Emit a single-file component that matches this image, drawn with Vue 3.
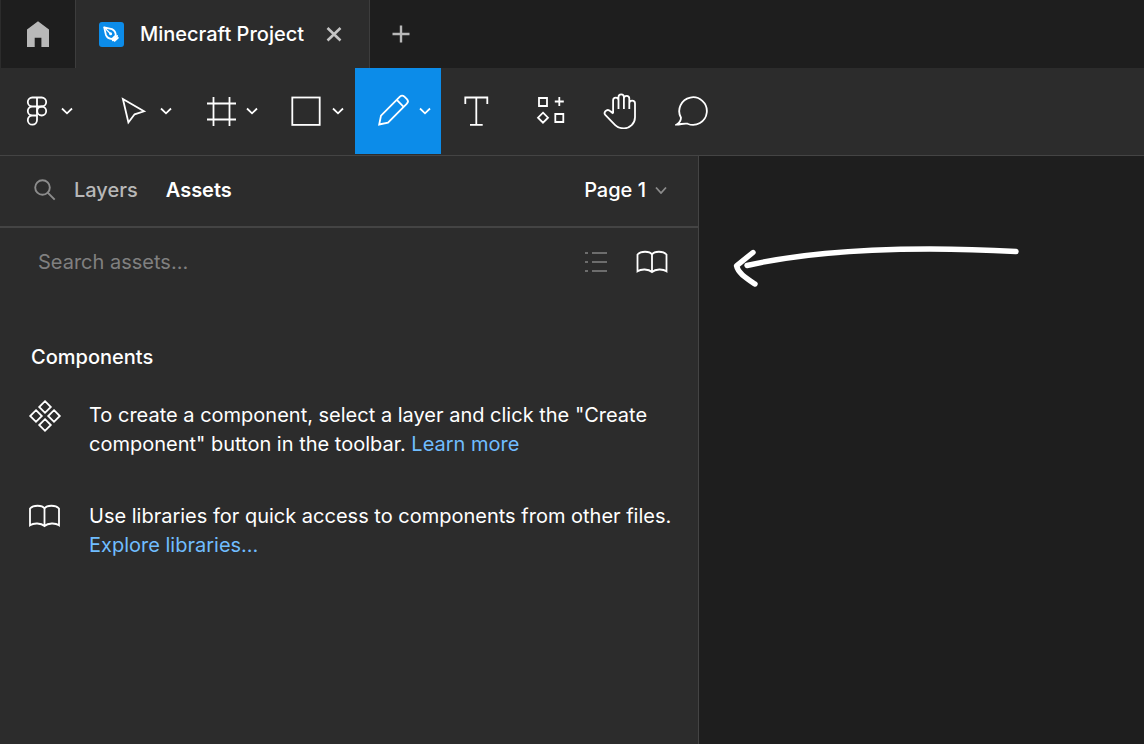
<script setup>
import { ref } from 'vue'

const query = ref('')
</script>

<template>
  <div class="app">
    <header class="tabs">
      <button class="home" aria-label="Home">
        <svg width="26" height="28" viewBox="0 0 26 28" fill="#b8b8b8">
          <path d="M2 9.6 13 1.3 24 9.6V27h-7.6v-9.3H9.7V27H2z" />
        </svg>
      </button>
      <div class="tab">
        <svg class="file-icon" width="25" height="25" viewBox="0 0 25 25">
          <rect width="25" height="25" rx="3" fill="#0c8ce9" />
          <g fill="none" stroke="#fff" stroke-width="1.8" stroke-linejoin="round" stroke-linecap="round">
            <path d="M5.2 5.4 13 7.1c2.2 1 3.7 3.4 3.8 6.3L13.2 17C10.1 16.8 7.9 15.3 6.9 12.8z" />
            <path d="M5.2 5.4 10.8 11" stroke-width="1.3" />
            <path d="M13.8 18.3 18.2 13.9M15.6 18.8 18.9 15.8" />
          </g>
          <circle cx="11.6" cy="11.8" r="1.5" fill="#fff" />
        </svg>
        <span class="title">Minecraft Project</span>
        <button class="close" aria-label="Close tab">
          <svg width="16" height="16" viewBox="0 0 16 16" fill="none" stroke="#c4c4c4" stroke-width="2.6">
            <path d="M1.5 2 14.5 14.5M14.5 2 1.5 14.5" />
          </svg>
        </button>
      </div>
      <button class="new" aria-label="New tab">
        <svg width="18" height="18" viewBox="0 0 18 18" fill="none" stroke="#b8b8b8" stroke-width="2.4">
          <path d="M9 .5V17.5M.5 9H17.5" />
        </svg>
      </button>
    </header>

    <nav class="toolbar" aria-label="Tools">
      <button class="tool menu main-menu" aria-label="Main menu">
        <svg class="glyph" viewBox="0 0 36 36">
          <path d="M18 4.5H13.3a4.5 4.5 0 0 0 0 9H18zM18 4.5h4.7a4.5 4.5 0 0 1 0 9H18zM18 13.5H13.3a4.5 4.5 0 0 0 0 9H18zM18 22.5H13.3a4.6 4.6 0 1 0 4.7 4.6z" />
          <circle cx="22.7" cy="18" r="4.5" />
        </svg>
        <svg class="chevron" viewBox="0 0 12 8"><path d="M1 1.5 6 6.3 11 1.5" /></svg>
      </button>
      <button class="tool menu" aria-label="Move">
        <svg class="glyph" viewBox="0 0 36 36">
          <path d="M5.9 6 27 18.3 17.6 21.3 11.4 29.5z" />
        </svg>
        <svg class="chevron" viewBox="0 0 12 8"><path d="M1 1.5 6 6.3 11 1.5" /></svg>
      </button>
      <button class="tool menu" aria-label="Frame">
        <svg class="glyph" viewBox="0 0 36 36">
          <path d="M10.5 4V33M26.5 4V33M4 10.5H33M4 26.5H33" />
        </svg>
        <svg class="chevron" viewBox="0 0 12 8"><path d="M1 1.5 6 6.3 11 1.5" /></svg>
      </button>
      <button class="tool menu" aria-label="Rectangle">
        <svg class="glyph" viewBox="0 0 36 36">
          <rect x="3.3" y="4.5" width="27.4" height="27.4" />
        </svg>
        <svg class="chevron" viewBox="0 0 12 8"><path d="M1 1.5 6 6.3 11 1.5" /></svg>
      </button>
      <button class="tool menu active" aria-label="Pencil" aria-pressed="true">
        <svg class="glyph" viewBox="0 0 36 36">
          <path d="M4.2 31.5 6 22.6 24.9 3.7a3.2 3.2 0 0 1 4.5 0l2.5 2.5a3.2 3.2 0 0 1 0 4.5L13 29.6zM21.8 6.8 28.6 13.8" />
        </svg>
        <svg class="chevron" viewBox="0 0 12 8"><path d="M1 1.5 6 6.3 11 1.5" /></svg>
      </button>
      <button class="tool" aria-label="Text">
        <svg class="glyph" viewBox="0 0 36 36">
          <path d="M6.3 11V4.5H28.3V11M17.3 4.5V31.8M11 31.8H23.7" />
        </svg>
      </button>
      <button class="tool" aria-label="Resources">
        <svg class="glyph" viewBox="0 0 36 36">
          <path d="M8 5h8v8H8zM24.3 21h8v8h-8zM28.3 4V13M23.8 8.5H32.8M12 19.7 17 24.7 12 29.7 7 24.7z" />
        </svg>
      </button>
      <button class="tool" aria-label="Hand">
        <svg class="glyph" viewBox="0 0 36 36">
          <path d="M10.1 20.5V7.3a2.7 2.7 0 0 1 5.4 0V16M15.5 16V4a2.7 2.7 0 0 1 5.4 0V16M20.9 16V5.6a2.7 2.7 0 0 1 5.4 0V16M26.3 10.5a2.8 2.8 0 0 1 5.7 0V24.3a11 11 0 0 1-11.3 11c-4 0-6.3-1-8.5-3.2L2.5 22.2a2.9 2.9 0 0 1 0-4c1.5-1.6 3.6-1.2 5 .1l2.6 2.2" />
        </svg>
      </button>
      <button class="tool" aria-label="Comment">
        <svg class="glyph" viewBox="0 0 36 36">
          <path d="M1.7 31.5C4.5 29.8 5.9 27.8 6 24.8A13.8 13.8 0 1 1 12.5 30.7C9 30.1 5.5 31.5 1.7 31.5z" />
        </svg>
      </button>
    </nav>

    <div class="workspace">
      <aside class="panel">
        <div class="panel-tabs">
          <svg class="search-icon" width="22" height="22" viewBox="0 0 22 22" fill="none" stroke="#8c8c8c" stroke-width="1.9">
            <circle cx="8.5" cy="8.5" r="7.3" />
            <path d="M13.7 13.7 20.7 20.7" />
          </svg>
          <button class="panel-tab">Layers</button>
          <button class="panel-tab selected">Assets</button>
          <button class="page">
            Page 1
            <svg class="page-chevron" viewBox="0 0 12 8"><path d="M1 1.5 6 7 11 1.5" /></svg>
          </button>
        </div>
        <div class="search">
          <input v-model="query" type="text" placeholder="Search assets..." aria-label="Search assets" />
          <button class="list" aria-label="Show as list">
            <svg width="24" height="22" viewBox="0 0 24 22" fill="none" stroke="#828282" stroke-width="1.7">
              <path d="M1 2H4M8 2H23M1 11H4M8 11H23M1 20H4M8 20H23" />
            </svg>
          </button>
          <button aria-label="Team library">
            <svg class="book" viewBox="0 0 34 24">
              <path d="M17 4.5C14.5.9 6 .8 2.500 4.500V21.300C6 18.800 13.500 18.800 17 22 20.500 18.800 28 18.800 31.500 21.300V4.500C28 .8 19.500.9 17 4.500V22" />
            </svg>
          </button>
        </div>
        <section class="components">
          <h2>Components</h2>
          <div class="hint">
            <svg class="component-icon" viewBox="0 0 34 34">
              <path d="M17 2.200 22.800 8 17 13.800 11.200 8zM8 11.200 13.800 17 8 22.800 2.200 17zM26 11.200 31.800 17 26 22.800 20.200 17zM17 20.200 22.800 26 17 31.800 11.200 26z" />
            </svg>
            <p>To create a component, select a layer and click the "Create component" button in the toolbar. <a href="#learn">Learn more</a></p>
          </div>
          <div class="hint">
            <svg class="book" viewBox="0 0 34 24">
              <path d="M16.500 4.500C14 .9 5.500.8 2 4.500V21.300C5.500 18.800 13 18.800 16.500 22 20 18.800 27.500 18.800 31 21.300V4.500C27.500.8 19 .9 16.500 4.500V22" />
            </svg>
            <p>Use libraries for quick access to components from other files. <a href="#libraries">Explore libraries...</a></p>
          </div>
        </section>
      </aside>
      <main class="canvas">
        <svg width="296" height="52" viewBox="0 0 296 52" fill="none" stroke="#fff" stroke-width="5.4" stroke-linecap="round" stroke-linejoin="round">
          <path d="M18 25.5C90 9 190 6 287 11.5" />
          <path d="M24 12.5 7.5 25.8C9 33 17 38 26 44" />
        </svg>
      </main>
    </div>
  </div>
</template>

<style>
body {
  margin: 0;
  background: #1e1e1e;
}
</style>

<style scoped>
.app {
  display: flex;
  flex-direction: column;
  min-height: 100vh;
  background: #1e1e1e;
  color: #fff;
  font-family: Inter, "Liberation Sans", sans-serif;
  font-size: 20px;
  line-height: 29px;
}
button {
  display: flex;
  align-items: center;
  justify-content: center;
  flex: none;
  margin: 0;
  padding: 0;
  border: 0;
  background: none;
  color: inherit;
  font: inherit;
}
svg {
  display: block;
  flex: none;
}
.tabs {
  display: flex;
  height: 68px;
  border-left: 1px solid #2c2c2c;
}
.home {
  width: 74px;
}
.tab {
  display: flex;
  align-items: center;
  box-sizing: border-box;
  width: 295px;
  padding-left: 23px;
  border: solid #3d3d3d;
  border-width: 0 1px;
  background: #2c2c2c;
}
.title {
  margin-left: 16px;
  font-weight: 500;
}
.close {
  margin-left: auto;
  margin-right: 27px;
}
.new {
  width: 62px;
}
.toolbar {
  display: flex;
  height: 87px;
  border-bottom: 1px solid #444;
  background: #2c2c2c;
}
.tool {
  width: 72px;
  height: 86px;
}
.menu {
  justify-content: flex-start;
  box-sizing: border-box;
  width: 86px;
  padding-left: 20px;
  gap: 7px;
}
.main-menu {
  width: 97px;
  padding-left: 19px;
  gap: 6px;
}
.active {
  gap: 8px;
  background: #0c8ce9;
}
.glyph,
.chevron,
.book,
.component-icon,
.page-chevron {
  fill: none;
  stroke: #fff;
  stroke-width: 1.8;
}
.glyph {
  width: 36px;
  height: 36px;
}
.chevron,
.page-chevron {
  width: 12px;
  height: 8px;
}
.page-chevron {
  margin-left: 9px;
  stroke: #8c8c8c;
}
.book {
  width: 34px;
  height: 24px;
}
.component-icon {
  width: 34px;
  height: 34px;
  margin-top: -2px;
}
.workspace {
  display: flex;
  flex: 1;
}
.panel {
  box-sizing: border-box;
  width: 699px;
  flex: none;
  border-right: 1px solid #444;
  background: #2c2c2c;
}
.panel-tabs {
  display: flex;
  align-items: center;
  height: 68px;
  padding: 0 31px 2px 34px;
  border-bottom: 2px solid #444;
  font-weight: 500;
}
.panel-tab {
  margin-left: 18px;
  color: #b8b8b8;
}
.selected {
  margin-left: 28px;
  color: #fff;
  font-weight: 600;
}
.page {
  margin-left: auto;
}
.search {
  display: flex;
  align-items: center;
  height: 68px;
  padding: 0 29px 0 38px;
}
.search input {
  flex: 1;
  min-width: 0;
  padding: 0;
  border: 0;
  outline: 0;
  background: none;
  color: #fff;
  font: inherit;
}
.search input::placeholder {
  color: #808080;
  opacity: 1;
}
.list {
  margin-right: 27px;
}
.components {
  padding: 47px 16px 0 28px;
}
h2 {
  margin: 0 0 29px 3px;
  font-size: 20px;
  font-weight: 500;
}
.hint {
  display: flex;
  align-items: flex-start;
  gap: 27px;
  margin-bottom: 43px;
}
.hint p {
  flex: 1;
  margin: 0;
}
.hint .book {
  margin-top: 2px;
}
a {
  color: #70bdff;
  text-decoration: none;
}
.canvas {
  flex: 1;
  min-width: 0;
  padding: 84px 30px;
  overflow: hidden;
}
</style>
